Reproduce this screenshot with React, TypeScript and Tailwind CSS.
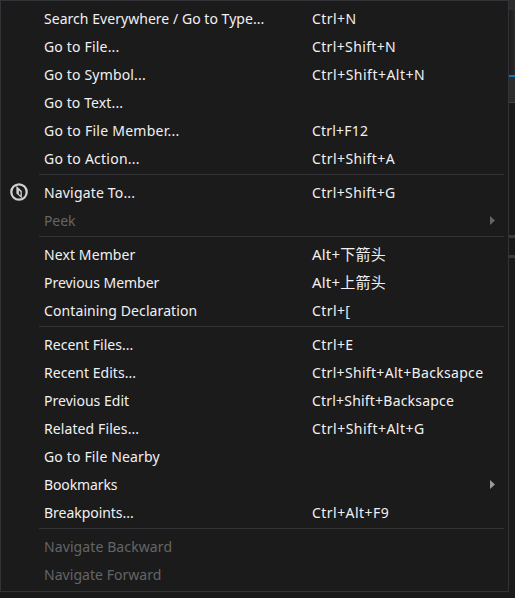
import React from "react";

type Item = {
  label: string;
  keys?: string;
  labelClass?: string;
  keysClass?: string;
  disabled?: boolean;
  submenu?: boolean;
  icon?: boolean;
};

const groups: Item[][] = [
  [
    { label: "Search Everywhere / Go to Type...", labelClass: "tracking-[0.04px]", keys: "Ctrl+N", keysClass: "tracking-[0.45px]" },
    { label: "Go to File...", labelClass: "tracking-[0.18px]", keys: "Ctrl+Shift+N", keysClass: "tracking-[0.36px]" },
    { label: "Go to Symbol...", labelClass: "tracking-[0.17px]", keys: "Ctrl+Shift+Alt+N", keysClass: "tracking-[0.48px]" },
    { label: "Go to Text...", labelClass: "tracking-[0.12px]" },
    { label: "Go to File Member...", labelClass: "tracking-[0.25px]", keys: "Ctrl+F12", keysClass: "tracking-[0.2px]" },
    { label: "Go to Action...", labelClass: "tracking-[0.24px]", keys: "Ctrl+Shift+A", keysClass: "tracking-[0.42px]" },
  ],
  [
    { label: "Navigate To...", labelClass: "tracking-[0.17px]", keys: "Ctrl+Shift+G", keysClass: "tracking-[0.36px]", icon: true },
    { label: "Peek", labelClass: "tracking-[-0.1px]", disabled: true, submenu: true },
  ],
  [
    { label: "Next Member", keys: "Alt+下箭头", keysClass: "-mt-0.5 text-[15px] tracking-[0.2px]" },
    { label: "Previous Member", labelClass: "tracking-[-0.03px]", keys: "Alt+上箭头", keysClass: "-mt-0.5 text-[15px] tracking-[0.2px]" },
    { label: "Containing Declaration", keys: "Ctrl+[", keysClass: "tracking-[0.4px]" },
  ],
  [
    { label: "Recent Files...", labelClass: "tracking-[0.03px]", keys: "Ctrl+E", keysClass: "tracking-[0.4px]" },
    { label: "Recent Edits...", labelClass: "tracking-[0.03px]", keys: "Ctrl+Shift+Alt+Backsapce", keysClass: "tracking-[0.32px]" },
    { label: "Previous Edit", labelClass: "tracking-[0.02px]", keys: "Ctrl+Shift+Backsapce", keysClass: "tracking-[0.2px]" },
    { label: "Related Files...", keys: "Ctrl+Shift+Alt+G", keysClass: "tracking-[0.48px]" },
    { label: "Go to File Nearby", labelClass: "tracking-[0.16px]" },
    { label: "Bookmarks", labelClass: "tracking-[-0.12px]", submenu: true },
    { label: "Breakpoints...", labelClass: "tracking-[-0.04px]", keys: "Ctrl+Alt+F9", keysClass: "tracking-[0.46px]" },
  ],
  [
    { label: "Navigate Backward", disabled: true },
    { label: "Navigate Forward", labelClass: "tracking-[0.04px]", disabled: true },
  ],
];

function CompassIcon() {
  return (
    <svg className="-mt-[2px] block size-[18px]" viewBox="0 0 18 18" fill="none">
      <circle cx="9" cy="9" r="7.7" stroke="#d0d0d0" strokeWidth="2.3" />
      <path d="M6.4 2.8 11.8 8v7.2L6.4 10.4Z" fill="#d0d0d0" />
      <path d="M8.9 7.4v3.5l1.6 1.5V9Z" fill="#1b1b1c" />
    </svg>
  );
}

function MenuRow({ item }: { item: Item }) {
  return (
    <div className={`flex h-7 items-center ${item.disabled ? "text-[#656565]" : "text-[#f1f1f1]"}`}>
      <div className="w-[43px] shrink-0 pl-[9px]">{item.icon && <CompassIcon />}</div>
      <div className={`w-[268px] shrink-0 ${item.labelClass ?? "tracking-[0.1px]"}`}>{item.label}</div>
      <div className={`w-[178px] shrink-0 ${item.keysClass ?? ""}`}>{item.keys}</div>
      {item.submenu && (
        <svg className="-mt-px block h-[9px] w-[5px]" viewBox="0 0 5 9">
          <path d="M0 0 5 4.5 0 9Z" fill={item.disabled ? "#656565" : "#999999"} />
        </svg>
      )}
    </div>
  );
}

export default function App() {
  return (
    <div className="flex h-[598px] w-[515px] flex-col overflow-hidden bg-[#1a1a1b]">
      <div className="flex h-[592px]">
        <div className="w-[509px] shrink-0 border border-[#333337] bg-[#1b1b1c] pt-1 font-['Noto_Sans','Noto_Sans_CJK_SC',sans-serif] text-[14px] leading-7 whitespace-nowrap">
          {groups.map((group, i) => (
            <React.Fragment key={i}>
              {i > 0 && (
                <div className="h-1.5 pt-px pr-1 pl-[38px]">
                  <div className="h-px bg-[#333337]" />
                </div>
              )}
              {group.map((item) => (
                <MenuRow key={item.label} item={item} />
              ))}
            </React.Fragment>
          ))}
        </div>
        <div className="flex w-1.5 flex-col">
          <div className="h-[10px] bg-[#2d2d30]" />
          <div className="h-[65px] bg-linear-to-r from-[#1c1c1e] to-[#29292c]" />
          <div className="h-0.5 bg-[#007acc]" />
          <div className="h-[25px] bg-[#2d2d30]" />
          <div className="h-px bg-[#3f3f46]" />
          <div className="h-[132px] bg-[#19191a]" />
          <div className="h-[3px] bg-[#3a3a3b]" />
          <div className="h-[17px] bg-[#19191a]" />
          <div className="h-[3px] bg-[#3a3a3b]" />
        </div>
      </div>
    </div>
  );
}
